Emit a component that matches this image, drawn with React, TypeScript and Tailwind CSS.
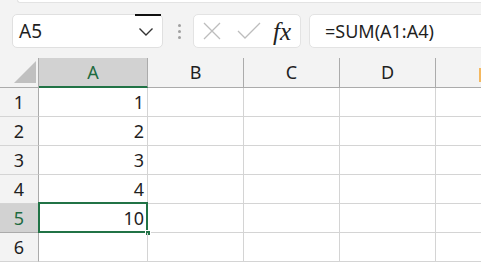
import React from "react";

const F = { fontFamily: '"Noto Sans", "Open Sans", sans-serif' };

export default function App() {
  const rows = [1, 2, 3, 4, 5, 6];
  const vals: Record<number, string> = { 1: "1", 2: "2", 3: "3", 4: "4", 5: "10" };
  return (
    <div className="w-[481px] h-[263px] overflow-hidden bg-white text-[#1f1f1f]" style={F}>
      {/* toolbar */}
      <div className="relative h-[58px] bg-[#f3f3f3]">
        <div className="ml-[17px] h-[3px] bg-white rounded-bl-[4px] border-b border-l border-[#e3e3e3]" />
        <div className="flex items-center pt-[11px]">
          <div className="relative ml-[12px] w-[151px] h-[34px] bg-white border border-[#e0e0e0] rounded-[5px] flex items-center justify-between pl-[6px] pr-[8px]">
            <span className="text-[19px] leading-none">A5</span>
            <svg width="16" height="10" viewBox="0 0 16 10" className="mt-[2px]">
              <polyline points="1.5,1.5 8,8 14.5,1.5" fill="none" stroke="#333" strokeWidth="1.4" />
            </svg>
            <div className="absolute left-[122px] top-[-1px] w-[26px] h-[2px] bg-[#111]" />
          </div>
          <div className="ml-[14px] w-[4px] flex flex-col gap-[3px] items-center">
            <div className="w-[3px] h-[3px] rounded-full bg-[#a0a0a0]" />
            <div className="w-[3px] h-[3px] rounded-full bg-[#a0a0a0]" />
            <div className="w-[3px] h-[3px] rounded-full bg-[#a0a0a0]" />
          </div>
          <div className="ml-[12px] w-[108px] h-[34px] bg-white border border-[#e3e3e3] rounded-[5px] flex items-center pl-[8px]">
            <svg width="20" height="20" viewBox="0 0 20 20">
              <path d="M2 2 L18 18 M18 2 L2 18" stroke="#bdbdbd" strokeWidth="1.3" fill="none" />
            </svg>
            <svg width="24" height="20" viewBox="0 0 24 20" className="ml-[15px]">
              <polyline points="1,10 8,17 23,2" stroke="#bdbdbd" strokeWidth="1.3" fill="none" />
            </svg>
            <span className="ml-[12px] text-[25px] leading-none italic font-medium text-[#222]" style={{ fontFamily: '"Liberation Serif", serif' }}>
              fx
            </span>
          </div>
          <div className="ml-[8px] flex-1 h-[34px] bg-white border border-[#e3e3e3] rounded-l-[5px] -mr-[4px] flex items-center pl-[15px]">
            <span className="text-[18px] leading-none">=SUM(A1:A4)</span>
          </div>
        </div>
      </div>
      {/* grid */}
      <div className="relative grid grid-cols-[39px_109px_96px_96px_96px_1fr] grid-rows-[30px_29px_29px_29px_29px_29px_29px]">
        <div className="bg-[#f3f3f3] border-b border-r border-[#ababab] flex items-end justify-end pr-[2px] pb-[4px]">
          <svg width="22" height="22" viewBox="0 0 22 22">
            <polygon points="22,0 22,22 0,22" fill="#c0c0c0" />
          </svg>
        </div>
        <div className="bg-[#d2d2d2] border-b-2 border-[#217346] border-r border-r-[#ababab] flex items-center justify-center text-[18px] text-[#1e6b40]">
          A
        </div>
        {["B", "C", "D"].map((c) => (
          <div key={c} className="bg-[#f3f3f3] border-b border-r border-[#ababab] flex items-center justify-center text-[18px]">
            {c}
          </div>
        ))}
        <div className="relative bg-[#f3f3f3] border-b border-[#ababab]">
          <div className="absolute right-0 top-[10px] w-[2px] h-[14px] bg-[#f4b860]" />
        </div>
        {rows.map((r) => (
          <React.Fragment key={r}>
            <div
              className={`border-b border-r flex items-center justify-center text-[18px] ${
                r === 5
                  ? "bg-[#d2d2d2] text-[#1e6b40] border-r-[#217346] border-b-[#ababab]"
                  : "bg-[#f3f3f3] border-[#ababab] border-b-[#d4d4d4]"
              }`}
            >
              {r}
            </div>
            <div className="relative border-b border-r border-[#d4d4d4] flex items-center justify-end pr-[3px] text-[18px]">
              {vals[r] ?? ""}
              {r === 5 && (
                <>
                  <div className="absolute left-[-1px] top-[-2px] right-[-1px] bottom-[-1px] border-2 border-[#217346]" />
                  <div className="absolute right-[-4px] bottom-[-4px] w-[6px] h-[6px] bg-[#217346] border border-white" />
                </>
              )}
            </div>
            <div className="border-b border-r border-[#d4d4d4]" />
            <div className="border-b border-r border-[#d4d4d4]" />
            <div className="border-b border-r border-[#d4d4d4]" />
            <div className="border-b border-[#d4d4d4]" />
          </React.Fragment>
        ))}
      </div>
    </div>
  );
}
